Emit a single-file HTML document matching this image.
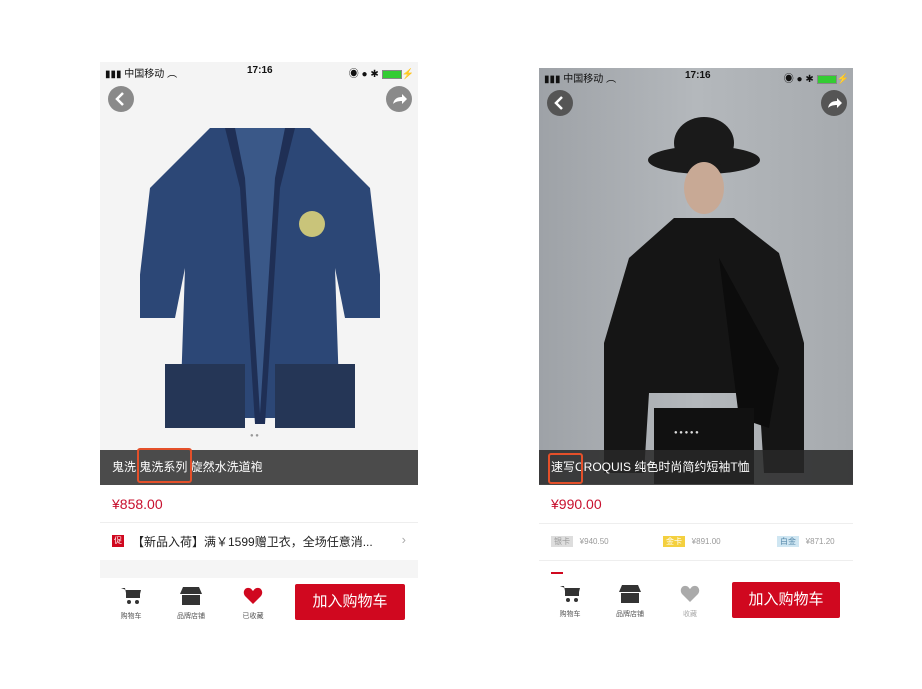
<!DOCTYPE html>
<html><head><meta charset="utf-8"><style>
body{margin:0;width:922px;height:689px;background:#fff;position:relative;overflow:hidden;font-family:"Liberation Sans","Noto Sans CJK SC",sans-serif}
.ph{position:absolute;overflow:hidden;background:#fff}
.abs{position:absolute}
.sb{position:absolute;left:0;right:0;height:16px;font-size:10px;color:#111}
.circ{position:absolute;width:26px;height:26px;border-radius:50%;background:#8a8a8a}
.title{position:absolute;left:0;right:0;height:35px;background:rgba(60,60,60,.92);color:#fff;font-size:12px;line-height:35px;padding-left:12px}
.price{position:absolute;left:12px;color:#c8102e;font-size:14px}
.line{position:absolute;left:0;right:0;height:1px;background:#eee}
.bar{position:absolute;left:0;right:0;height:52px;background:#fff}
.btn{position:absolute;background:#d0081f;color:#fff;font-size:15px;text-align:center;line-height:36px;border-radius:2px}
.lbl{position:absolute;font-size:7px;color:#555;width:40px;text-align:center}
.hl{position:absolute;border:2px solid #e4502a;border-radius:3px}
</style></head><body>

<!-- phone 1 -->
<div class="ph" style="left:100px;top:62px;width:318px;height:568px;background:#fff">
 <div class="abs" style="left:0;top:0;width:318px;height:390px;background:#f4f4f4"></div>
 <div class="sb" style="top:3px"><span class="abs" style="left:5px">▮▮▮ 中国移动 ︵</span><span class="abs" style="left:147px;font-weight:bold">17:16</span><span class="abs" style="right:4px">◉ ● ✱ <span style="display:inline-block;width:18px;height:7px;background:#3c3;border:1px solid #888;vertical-align:middle"></span>⚡</span></div>
 <div class="circ" style="left:8px;top:24px"><svg width="26" height="26"><path d="M15 7l-6 6 6 6" stroke="#fff" stroke-width="2.5" fill="none"/></svg></div>
 <div class="circ" style="right:6px;top:24px"><svg width="26" height="26"><path d="M7 18c1-5 4-7 9-7v-3l5 5-5 5v-3c-4 0-7 1-9 3z" fill="#fff"/></svg></div>
 <svg class="abs" style="left:40px;top:62px" width="240" height="310">
  <path d="M70 4h100l60 60 15 130h-40l-10 -50 5 150h-160l5-150-10 50h-40l15-130z" fill="#2c4776"/>
  <path d="M85 4h70l-15 60-15 236h-10l-15-236z" fill="#1f2f55"/>
  <path d="M95 4h50l-10 50-15 236-15-236z" fill="#3a5888"/>
  <rect x="25" y="240" width="80" height="64" fill="#253656"/><rect x="135" y="240" width="80" height="64" fill="#253656"/>
  <circle cx="172" cy="100" r="13" fill="#c9c47a"/>
 </svg>
 <div class="abs" style="left:150px;top:371px;font-size:6px;color:#999">● ●</div>
 <div class="title" style="top:388px">鬼洗 鬼洗系列 旋然水洗道袍</div>
 <div class="hl" style="left:37px;top:386px;width:51px;height:31px"></div>
 <div class="price" style="top:434px">¥858.00</div>
 <div class="line" style="top:460px"></div>
 <div class="abs" style="left:12px;top:473px;width:12px;height:12px;background:#d0081f;color:#fff;font-size:8px;text-align:center;line-height:12px">促</div>
 <div class="abs" style="left:32px;top:471px;font-size:12px;color:#222">【新品入荷】满￥1599赠卫衣，全场任意消...</div>
 <div class="abs" style="right:12px;top:470px;color:#aaa;font-size:13px">›</div>
 <div class="abs" style="left:0;top:498px;width:318px;height:20px;background:#f5f5f5"></div>
 <div class="bar" style="top:516px">
  <svg class="abs" style="left:20px;top:8px" width="22" height="20"><path d="M1 2h4l2 10h12l2-8H6" fill="#333"/><rect x="6" y="4" width="14" height="8" fill="#333"/><circle cx="9" cy="16" r="2" fill="#333"/><circle cx="17" cy="16" r="2" fill="#333"/></svg>
  <div class="lbl" style="left:11px;top:33px">购物车</div>
  <svg class="abs" style="left:80px;top:8px" width="22" height="20"><path d="M3 1h16l3 7H0z M2 9h18v10H2z" fill="#333"/></svg>
  <div class="lbl" style="left:71px;top:33px">品牌店铺</div>
  <svg class="abs" style="left:143px;top:9px" width="20" height="18"><path d="M10 17L2 9C-1 5 2 0 6 1c2 0 3 2 4 3 1-1 2-3 4-3 4-1 7 4 4 8z" fill="#d0081f"/></svg>
  <div class="lbl" style="left:133px;top:33px">已收藏</div>
  <div class="btn" style="left:195px;top:6px;width:110px">加入购物车</div>
 </div>
</div>

<!-- phone 2 -->
<div class="ph" style="left:539px;top:68px;width:314px;height:560px">
 <div class="abs" style="left:0;top:0;width:314px;height:416px;background:linear-gradient(90deg,#9ea2a7,#b4b8bc 50%,#a6aaae)"></div>
 <svg class="abs" style="left:40px;top:40px" width="240" height="376">
  <ellipse cx="125" cy="52" rx="56" ry="14" fill="#1a1a1a"/>
  <ellipse cx="125" cy="35" rx="30" ry="26" fill="#1a1a1a"/>
  <ellipse cx="125" cy="80" rx="20" ry="26" fill="#c8a995"/>
  <path d="M50 150 L95 110 h60 l45 35 25 90 v130 h-40 l-5-80 h-110 l-5 80 h-40 v-130z" fill="#151515"/>
  <path d="M140 150 L200 260 l-10 60 -30 -10z" fill="#0c0c0c"/>
  <rect x="75" y="300" width="100" height="76" fill="#111"/>
 </svg>
 <div class="sb" style="top:2px"><span class="abs" style="left:5px">▮▮▮ 中国移动 ︵</span><span class="abs" style="left:146px;font-weight:bold">17:16</span><span class="abs" style="right:4px">◉ ● ✱ <span style="display:inline-block;width:18px;height:7px;background:#3c3;border:1px solid #888;vertical-align:middle"></span>⚡</span></div>
 <div class="circ" style="left:8px;top:22px;background:#555"><svg width="26" height="26"><path d="M15 7l-6 6 6 6" stroke="#fff" stroke-width="2.5" fill="none"/></svg></div>
 <div class="circ" style="right:6px;top:22px;background:#555"><svg width="26" height="26"><path d="M7 18c1-5 4-7 9-7v-3l5 5-5 5v-3c-4 0-7 1-9 3z" fill="#fff"/></svg></div>
 <div class="abs" style="left:135px;top:362px;font-size:6px;color:#ddd">● ● ● ● ●</div>
 <div class="title" style="top:382px;background:rgba(40,40,40,.85)">速写CROQUIS 纯色时尚简约短袖T恤</div>
 <div class="hl" style="left:9px;top:385px;width:31px;height:27px"></div>
 <div class="price" style="top:428px">¥990.00</div>
 <div class="line" style="top:455px"></div>
 <div class="abs" style="left:12px;top:468px;font-size:8px;color:#999"><span style="background:#ddd;padding:1px 3px">银卡</span>&nbsp;&nbsp; ¥940.50</div>
 <div class="abs" style="left:124px;top:468px;font-size:8px;color:#999"><span style="background:#f4d03f;color:#fff;padding:1px 3px">金卡</span>&nbsp;&nbsp; ¥891.00</div>
 <div class="abs" style="left:238px;top:468px;font-size:8px;color:#999"><span style="background:#cfe6f2;color:#58a;padding:1px 3px">白金</span>&nbsp;&nbsp; ¥871.20</div>
 <div class="line" style="top:492px"></div>
 <div class="abs" style="left:12px;top:504px;width:12px;height:8px;background:#d0081f"></div>
 <div class="bar" style="top:506px">
  <svg class="abs" style="left:20px;top:10px" width="22" height="20"><path d="M1 2h4l2 10h12l2-8H6" fill="#333"/><rect x="6" y="4" width="14" height="8" fill="#333"/><circle cx="9" cy="16" r="2" fill="#333"/><circle cx="17" cy="16" r="2" fill="#333"/></svg>
  <div class="lbl" style="left:11px;top:35px">购物车</div>
  <svg class="abs" style="left:80px;top:10px" width="22" height="20"><path d="M3 1h16l3 7H0z M2 9h18v10H2z" fill="#333"/></svg>
  <div class="lbl" style="left:71px;top:35px">品牌店铺</div>
  <svg class="abs" style="left:141px;top:11px" width="20" height="18"><path d="M10 17L2 9C-1 5 2 0 6 1c2 0 3 2 4 3 1-1 2-3 4-3 4-1 7 4 4 8z" fill="#aaa"/></svg>
  <div class="lbl" style="left:131px;top:35px;color:#aaa">收藏</div>
  <div class="btn" style="left:193px;top:8px;width:108px">加入购物车</div>
 </div>
</div>
</body></html>
